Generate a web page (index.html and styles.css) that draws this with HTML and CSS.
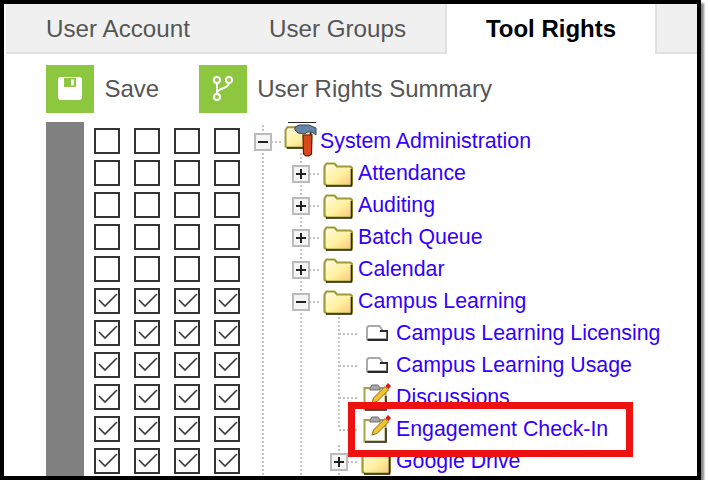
FILE: index.html
```html
<!DOCTYPE html>
<html lang="en">
<head>
    <meta charset="UTF-8">
    <title>Tool Rights</title>
    <link rel="stylesheet" href="styles.css">
</head>
<body>
    <svg class="defs" aria-hidden="true">
        <defs>
            <linearGradient id="folder-fill" x1="0" y1="0" x2="1" y2="1">
                <stop offset="0" stop-color="#fffde0"/>
                <stop offset="0.55" stop-color="#fff0a0"/>
                <stop offset="1" stop-color="#f5c878"/>
            </linearGradient>
            <symbol id="tick" viewBox="0 0 22 22">
                <path d="M3 10l6 6L21 4" fill="none" stroke="#3a3a3a" stroke-width="1.6"/>
            </symbol>
            <symbol id="folder" viewBox="0 0 30 26">
                <path d="M1.5 23V5.500l2-3h8l2.500 3h13.500l1.500 1.500V23l-1.500 1.500h-24z" fill="url(#folder-fill)" stroke="#a09a3c" stroke-width="2.200"/>
                <path d="M3 25h25.500V8" fill="none" stroke="#2e2a10" stroke-width="1.600"/>
            </symbol>
            <symbol id="page" viewBox="0 0 22 16">
                <path d="M1 14V2.500L2.500 1h11l3.500 5h4v8z" fill="#fff" stroke="#aaa" stroke-width="2"/>
                <path d="M14 6h7.500v9H1.500" fill="none" stroke="#2b2b2b" stroke-width="2"/>
            </symbol>
            <symbol id="note" viewBox="0 0 28 28">
                <path d="M1.500 5h21v21.500h-21z" fill="#fff" stroke="#a8a250" stroke-width="2"/>
                <path d="M2 27h21V13" fill="none" stroke="#2b2b2b" stroke-width="1.600"/>
                <path d="M7 5l2-3h6l2 3v2H7z" fill="#a8a8a8" stroke="#6e6e6e"/>
                <path d="M9 20l1.500-5L22 3.500l3.500 3.500L14 18.500z" fill="#f2c230" stroke="#8a6a10"/>
                <path d="M22.500 3l2.500-3 3 3-2.500 3z" fill="#e01515"/>
            </symbol>
        </defs>
    </svg>

    <div class="frame">
        <div class="tabs">
            <div class="tab account">User Account</div>
            <div class="tab groups">User Groups</div>
            <div class="tab active">Tool Rights</div>
        </div>

        <div class="toolbar">
            <div class="tool">
                <span class="tool-icon">
                    <svg width="48" height="48" viewBox="0 0 48 48">
                        <path d="M12 15a3 3 0 0 1 3-3h18a3 3 0 0 1 3 3v17a3 3 0 0 1-3 3H15a3 3 0 0 1-3-3z" fill="#fff"/>
                        <path d="M18 13h12v9H18z" fill="#8dc63f"/>
                        <path d="M25 14.500h3v6h-3z" fill="#fff"/>
                    </svg>
                </span>
                Save
            </div>
            <div class="tool">
                <span class="tool-icon">
                    <svg width="48" height="48" viewBox="0 0 48 48" fill="none" stroke="#fff" stroke-width="2">
                        <circle cx="18" cy="15" r="3"/>
                        <circle cx="30" cy="15" r="3"/>
                        <circle cx="18" cy="32" r="3"/>
                        <path d="M18 18v11M30 18c0 6-12 5-12 10"/>
                    </svg>
                </span>
                User Rights Summary
            </div>
        </div>

        <div class="rights">
            <div class="rail"></div>
            <div class="rows">
                <div class="row">
                    <div class="checks"><span class="box"></span><span class="box"></span><span class="box"></span><span class="box"></span></div>
                    <div class="node">
                        <span class="cell toggle"><span class="pm minus"></span></span>
                        <span class="cell icon open">
                            <svg class="root-icon" width="34" height="38" viewBox="0 0 34 38">
                                <path d="M4 .5h28" stroke="#222"/>
                                <use href="#folder" x="0" y="3" width="28" height="24"/>
                                <path d="M11 5l4-2h10l7 3v7l-4-3h-5l-2 2-7-1-3-3z" fill="#6684a8" stroke="#3e4854"/>
                                <path d="M19 13h9l-.5 19-2.500 2h-3l-2.500-2z" fill="#d8481c" stroke="#5a1a08" stroke-width="1.200"/>
                            </svg>
                        </span>
                        <a class="label">System Administration</a>
                    </div>
                </div>
                <div class="row">
                    <div class="checks"><span class="box"></span><span class="box"></span><span class="box"></span><span class="box"></span></div>
                    <div class="node">
                        <span class="cell guide"></span>
                        <span class="cell toggle"><span class="pm plus"></span></span>
                        <span class="cell icon"><svg class="folder" width="30" height="26"><use href="#folder"/></svg></span>
                        <a class="label">Attendance</a>
                    </div>
                </div>
                <div class="row">
                    <div class="checks"><span class="box"></span><span class="box"></span><span class="box"></span><span class="box"></span></div>
                    <div class="node">
                        <span class="cell guide"></span>
                        <span class="cell toggle"><span class="pm plus"></span></span>
                        <span class="cell icon"><svg class="folder" width="30" height="26"><use href="#folder"/></svg></span>
                        <a class="label">Auditing</a>
                    </div>
                </div>
                <div class="row">
                    <div class="checks"><span class="box"></span><span class="box"></span><span class="box"></span><span class="box"></span></div>
                    <div class="node">
                        <span class="cell guide"></span>
                        <span class="cell toggle"><span class="pm plus"></span></span>
                        <span class="cell icon"><svg class="folder" width="30" height="26"><use href="#folder"/></svg></span>
                        <a class="label">Batch Queue</a>
                    </div>
                </div>
                <div class="row">
                    <div class="checks"><span class="box"></span><span class="box"></span><span class="box"></span><span class="box"></span></div>
                    <div class="node">
                        <span class="cell guide"></span>
                        <span class="cell toggle"><span class="pm plus"></span></span>
                        <span class="cell icon"><svg class="folder" width="30" height="26"><use href="#folder"/></svg></span>
                        <a class="label">Calendar</a>
                    </div>
                </div>
                <div class="row">
                    <div class="checks"><span class="box"><svg class="tick"><use href="#tick"/></svg></span><span class="box"><svg class="tick"><use href="#tick"/></svg></span><span class="box"><svg class="tick"><use href="#tick"/></svg></span><span class="box"><svg class="tick"><use href="#tick"/></svg></span></div>
                    <div class="node">
                        <span class="cell guide"></span>
                        <span class="cell toggle"><span class="pm minus"></span></span>
                        <span class="cell icon open"><svg class="folder" width="30" height="26"><use href="#folder"/></svg></span>
                        <a class="label">Campus Learning</a>
                    </div>
                </div>
                <div class="row">
                    <div class="checks"><span class="box"><svg class="tick"><use href="#tick"/></svg></span><span class="box"><svg class="tick"><use href="#tick"/></svg></span><span class="box"><svg class="tick"><use href="#tick"/></svg></span><span class="box"><svg class="tick"><use href="#tick"/></svg></span></div>
                    <div class="node">
                        <span class="cell guide"></span>
                        <span class="cell guide"></span>
                        <span class="cell branch"></span>
                        <span class="cell icon"><svg width="22" height="16"><use href="#page"/></svg></span>
                        <a class="label">Campus Learning Licensing</a>
                    </div>
                </div>
                <div class="row">
                    <div class="checks"><span class="box"><svg class="tick"><use href="#tick"/></svg></span><span class="box"><svg class="tick"><use href="#tick"/></svg></span><span class="box"><svg class="tick"><use href="#tick"/></svg></span><span class="box"><svg class="tick"><use href="#tick"/></svg></span></div>
                    <div class="node">
                        <span class="cell guide"></span>
                        <span class="cell guide"></span>
                        <span class="cell branch"></span>
                        <span class="cell icon"><svg width="22" height="16"><use href="#page"/></svg></span>
                        <a class="label">Campus Learning Usage</a>
                    </div>
                </div>
                <div class="row">
                    <div class="checks"><span class="box"><svg class="tick"><use href="#tick"/></svg></span><span class="box"><svg class="tick"><use href="#tick"/></svg></span><span class="box"><svg class="tick"><use href="#tick"/></svg></span><span class="box"><svg class="tick"><use href="#tick"/></svg></span></div>
                    <div class="node">
                        <span class="cell guide"></span>
                        <span class="cell guide"></span>
                        <span class="cell branch"></span>
                        <span class="cell icon"><svg width="28" height="28"><use href="#note"/></svg></span>
                        <a class="label">Discussions</a>
                    </div>
                </div>
                <div class="row">
                    <div class="checks"><span class="box"><svg class="tick"><use href="#tick"/></svg></span><span class="box"><svg class="tick"><use href="#tick"/></svg></span><span class="box"><svg class="tick"><use href="#tick"/></svg></span><span class="box"><svg class="tick"><use href="#tick"/></svg></span></div>
                    <div class="node">
                        <span class="cell guide"></span>
                        <span class="cell guide"></span>
                        <span class="cell branch last"></span>
                        <span class="cell icon"><svg width="28" height="28"><use href="#note"/></svg></span>
                        <a class="label">Engagement Check-In</a>
                    </div>
                </div>
                <div class="row">
                    <div class="checks"><span class="box"><svg class="tick"><use href="#tick"/></svg></span><span class="box"><svg class="tick"><use href="#tick"/></svg></span><span class="box"><svg class="tick"><use href="#tick"/></svg></span><span class="box"><svg class="tick"><use href="#tick"/></svg></span></div>
                    <div class="node">
                        <span class="cell guide"></span>
                        <span class="cell guide"></span>
                        <span class="cell toggle"><span class="pm plus"></span></span>
                        <span class="cell icon"><svg class="folder" width="30" height="26"><use href="#folder"/></svg></span>
                        <a class="label">Google Drive</a>
                    </div>
                </div>
            </div>
        </div>

        <div class="callout"></div>
    </div>
</body>
</html>
```

FILE: styles.css
```css
:root {
    --green: #8dc63f;
    --link: #3300ff;
    --dots: #c2c2c2;
    --dots-down: repeating-linear-gradient(var(--dots) 0 2px, transparent 2px 4px);
    --dots-across: repeating-linear-gradient(90deg, var(--dots) 0 2px, transparent 2px 4px);
}

body {
    margin: 0;
    background: #fff;
    font-family: "Liberation Sans", Arial, sans-serif;
}

.defs {
    display: block;
    width: 0;
    height: 0;
}

.frame {
    position: relative;
    box-sizing: border-box;
    width: 701px;
    height: 480px;
    border: 4px solid #000;
    box-shadow: 3px 3px 2px #888;
    overflow: hidden;
    background: #fff;
}

.tabs {
    display: flex;
    height: 48px;
    margin-left: 2px;
    background: #f0f0f0;
    border-bottom: 2px solid #e0e0e0;
}

.tab {
    box-sizing: border-box;
    flex: none;
    font-size: 24.2px;
    line-height: 50px;
    text-align: center;
    color: #555;
}

.account {
    width: 224px;
}

.groups {
    width: 215px;
}

.tab.active {
    width: 212px;
    height: 50px;
    background: #fff;
    border-left: 2px solid #e0e0e0;
    border-right: 2px solid #e0e0e0;
    font-size: 24px;
    font-weight: bold;
    color: #000;
}

.toolbar {
    display: flex;
    gap: 39.5px;
    padding: 11px 0 9px 42px;
}

.tool {
    display: flex;
    align-items: center;
    gap: 10.5px;
    font-size: 24px;
    color: #555;
}

.tool-icon {
    width: 48px;
    height: 48px;
    background: var(--green);
}

.tool-icon svg {
    display: block;
}

.rights {
    display: flex;
    gap: 10px;
    height: 354px;
    padding-left: 42px;
}

.rail {
    flex: none;
    width: 38px;
    background: #808080;
}

.rows {
    padding-top: 3px;
}

.row {
    display: flex;
    gap: 4px;
    height: 32px;
}

.checks {
    display: flex;
    align-items: center;
    gap: 14px;
}

.box {
    box-sizing: border-box;
    width: 26px;
    height: 26px;
    border: 2px solid #333;
}

.tick {
    display: block;
    width: 22px;
    height: 22px;
}

.node {
    display: flex;
    align-items: center;
    height: 32px;
}

.cell {
    display: flex;
    flex: none;
    align-items: center;
    justify-content: center;
    width: 38px;
    height: 32px;
}

/* dotted connectors */
.guide {
    background: var(--dots-down) center top / 2px 32px no-repeat;
}

.toggle,
.branch {
    background-image: var(--dots-across), var(--dots-down);
    background-repeat: no-repeat;
    background-position: right 16px, center top;
    background-size: 19px 2px, 2px 32px;
}

.branch {
    background-size: 20px 2px, 2px 32px;
    background-position: 19px 16px, center top;
}

.branch.last {
    background-size: 20px 2px, 2px 16px;
}

.icon.open {
    background: var(--dots-down) center bottom / 2px 4px no-repeat;
}

.pm {
    position: relative;
    box-sizing: border-box;
    width: 18px;
    height: 18px;
    margin-top: 2px;
    background: #f4f4f4;
    border: 2px solid #bbb;
}

.pm::before,
.pm.plus::after {
    content: "";
    position: absolute;
    left: 2px;
    top: 6px;
    width: 10px;
    height: 2px;
    background: #222;
}

.pm.plus::after {
    left: 6px;
    top: 2px;
    width: 2px;
    height: 10px;
}

.root-icon {
    overflow: visible;
}

.folder {
    margin: 2px 2px 0 0;
}

.label {
    font-size: 21.33px;
    line-height: 32px;
    white-space: nowrap;
    color: var(--link);
}

.callout {
    position: absolute;
    left: 344px;
    top: 398px;
    width: 271px;
    height: 41px;
    border: 7px solid #ee1111;
}
```
